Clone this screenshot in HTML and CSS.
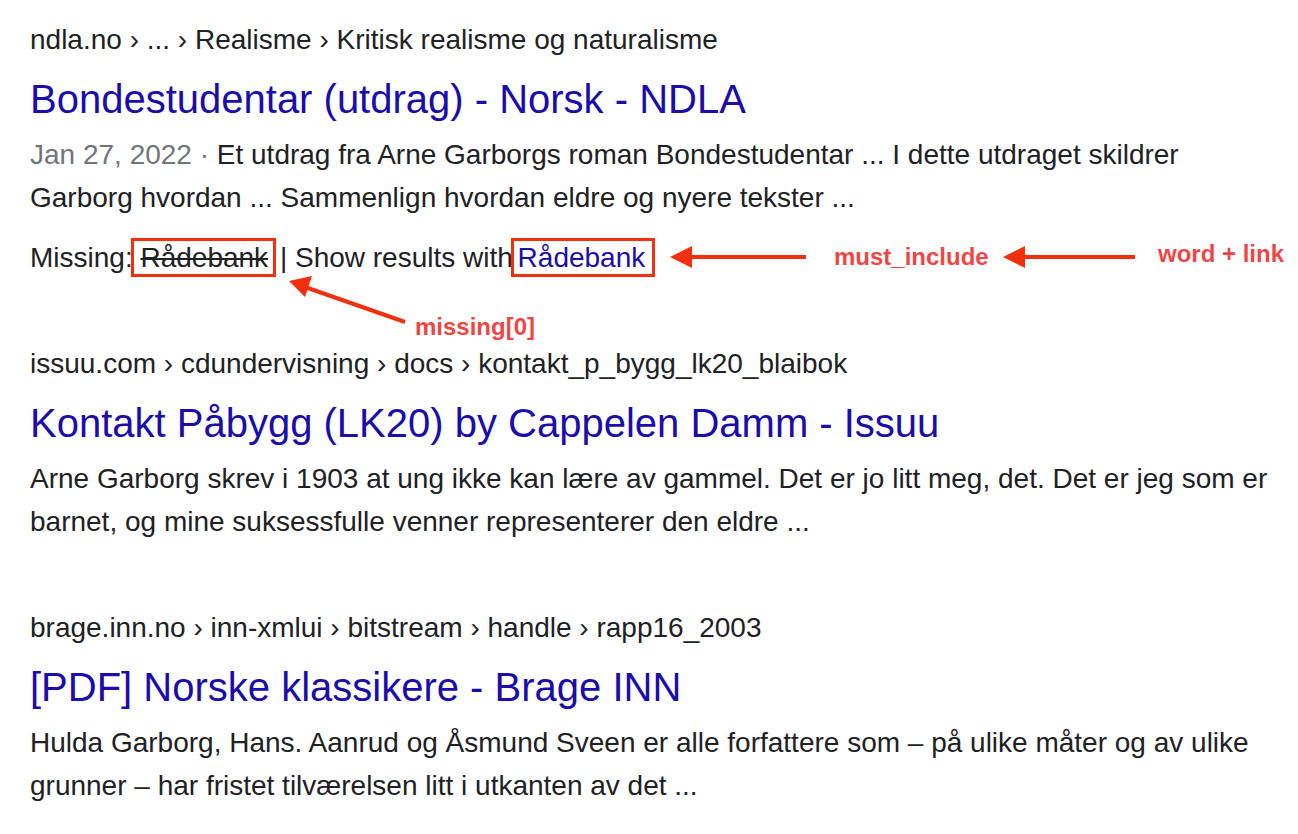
FILE: index.html
```html
<!DOCTYPE html>
<html lang="no">
<head>
<meta charset="utf-8">
<title>Search results</title>
<link rel="stylesheet" href="styles.css">
</head>
<body>
<main class="results">
  <section class="result">
    <div class="crumb">ndla.no › ... › Realisme › Kritisk realisme og naturalisme</div>
    <a class="title" href="#">Bondestudentar (utdrag) - Norsk - NDLA</a>
    <p class="snippet"><span class="date">Jan 27, 2022 ·</span> Et utdrag fra Arne Garborgs roman Bondestudentar ... I dette utdraget skildrer Garborg hvordan ... Sammenlign hvordan eldre og nyere tekster ...</p>
    <p class="missing">Missing: <span class="box box-missing"><s>Rådebank</s></span> | Show results with <span class="box box-link"><a href="#" class="inline-link">Rådebank</a></span></p>
  </section>
  <section class="result">
    <div class="crumb">issuu.com › cdundervisning › docs › kontakt_p_bygg_lk20_blaibok</div>
    <a class="title" href="#">Kontakt Påbygg (LK20) by Cappelen Damm - Issuu</a>
    <p class="snippet">Arne Garborg skrev i 1903 at ung ikke kan lære av gammel. Det er jo litt meg, det. Det er jeg som er barnet, og mine suksessfulle venner representerer den eldre ...</p>
  </section>
  <section class="result">
    <div class="crumb">brage.inn.no › inn-xmlui › bitstream › handle › rapp16_2003</div>
    <a class="title" href="#">[PDF] Norske klassikere - Brage INN</a>
    <p class="snippet">Hulda Garborg, Hans. Aanrud og Åsmund Sveen er alle forfattere som – på ulike måter og av ulike grunner – har fristet tilværelsen litt i utkanten av det ...</p>
  </section>
</main>

<svg class="arrows" width="1298" height="834" viewBox="0 0 1298 834" aria-hidden="true">
  <g stroke="#f2300f" stroke-width="4" fill="#f2300f">
    <line x1="806" y1="257" x2="688" y2="257"/>
    <polygon points="670,257 692,246 692,268" stroke="none"/>
    <line x1="1135" y1="257" x2="1020" y2="257"/>
    <polygon points="1003,257 1025,246 1025,268" stroke="none"/>
    <line x1="405" y1="322" x2="305" y2="287"/>
    <polygon points="289,281 312,276 305,297" stroke="none"/>
  </g>
</svg>
<span class="label label-must">must_include</span>
<span class="label label-word">word + link</span>
<span class="label label-missing">missing[0]</span>
</body>
</html>
```

FILE: styles.css
```css
html, body {
  margin: 0;
  padding: 0;
  background: #ffffff;
}

body {
  font-family: "Liberation Sans", Arial, sans-serif;
  color: #202124;
  position: relative;
  width: 1298px;
  height: 834px;
  overflow: hidden;
}

.results {
  padding: 18px 0 0 30px;
  display: flex;
  flex-direction: column;
}

.result {
  display: flex;
  flex-direction: column;
  align-items: flex-start;
  margin-bottom: 63px;
}

.crumb {
  font-size: 28px;
  line-height: 44px;
  color: #202124;
  white-space: nowrap;
}

.title {
  font-size: 40px;
  line-height: 48px;
  margin-top: 13px;
  color: #1a0dab;
  text-decoration: none;
  white-space: nowrap;
}

.snippet {
  margin: 10px 0 0 0;
  font-size: 28px;
  line-height: 43px;
  width: 1252px;
  color: #202124;
}

.date {
  color: #70757a;
}

.missing {
  margin: 17px 0 0 0;
  font-size: 28px;
  line-height: 43px;
  color: #202124;
  white-space: nowrap;
}

.box {
  outline: 3px solid #f2300f;
  outline-offset: 1px;
}

.box-missing {
  margin-left: -5px;
  padding: 0 4px 0 5px;
}

.box-link {
  margin-left: -6px;
  padding: 0 6px 0 3px;
}

.missing s {
  text-decoration-thickness: 2px;
}

.inline-link {
  color: #1a0dab;
  text-decoration: none;
}

.arrows {
  position: absolute;
  left: 0;
  top: 0;
  pointer-events: none;
}

.label {
  position: absolute;
  font-family: "Liberation Sans", Arial, sans-serif;
  font-weight: bold;
  font-size: 24px;
  line-height: 28px;
  color: #ec4646;
  white-space: nowrap;
}

.label-must {
  left: 834px;
  top: 243px;
}

.label-word {
  left: 1158px;
  top: 240px;
}

.label-missing {
  left: 415px;
  top: 313px;
}
```
